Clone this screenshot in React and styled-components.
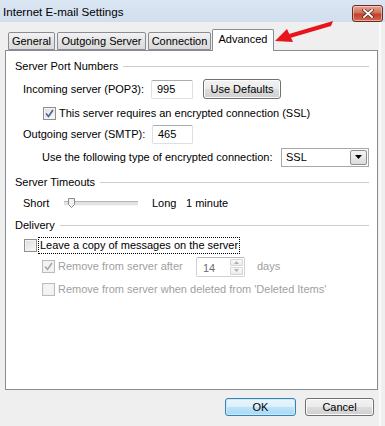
import React from 'react';
import styled, { createGlobalStyle } from 'styled-components';

const Global = createGlobalStyle`
  html, body { margin: 0; padding: 0; background: #efefef; }
  body {
    font-family: "Segoe UI", "Liberation Sans", Arial, sans-serif;
    font-size: 11px;
    color: #000;
  }
  * { box-sizing: border-box; }
`;

const Window = styled.div`
  position: relative;
  width: 385px;
  height: 426px;
  background: #efefef;
  display: flex;
  flex-direction: column;
  overflow: hidden;
`;

const TitleBar = styled.div`
  height: 22px;
  display: flex;
  align-items: center;
  justify-content: space-between;
  padding: 0 2px 0 3px;
  background: linear-gradient(#dbe6f3, #d1deee);
`;

const Title = styled.span`
  font-size: 11.6px;
  color: #000;
  margin-top: 1px;
`;

const CloseButton = styled.div`
  width: 31px;
  height: 17px;
  margin-top: 4px;
  border-radius: 3px;
  border: 1px solid #6d2a25;
  background: linear-gradient(#e8a493 0%, #d1705a 45%, #c2402a 55%, #d06a4f 100%);
  box-shadow: inset 0 0 0 1px rgba(255, 255, 255, 0.45);
  display: flex;
  align-items: center;
  justify-content: center;
`;

const Body = styled.div`
  flex: 1;
  display: flex;
  flex-direction: column;
  padding: 7px 7px 0 5px;
  box-shadow: inset -4px 0 0 #efefef, inset -6px 0 0 #f9f9f9;
`;

const TabRow = styled.div`
  display: flex;
  align-items: flex-end;
  gap: 2px;
  height: 21px;
  padding-left: 3px;
  position: relative;
  z-index: 2;
`;

const Tab = styled.div`
  width: ${p => p.$w}px;
  flex: none;
  height: ${p => (p.$active ? 22 : 18)}px;
  margin-bottom: ${p => (p.$active ? -1 : 0)}px;
  margin-left: ${p => (p.$active ? -1 : 0)}px;
  display: flex;
  align-items: center;
  justify-content: center;
  padding-bottom: ${p => (p.$active ? 3 : 0)}px;
  border: 1px solid #898c95;
  border-bottom: ${p => (p.$active ? 'none' : '1px solid #898c95')};
  border-radius: 2px 2px 0 0;
  background: ${p => (p.$active ? '#fff' : 'linear-gradient(#f3f3f3, #e4e4e4 50%, #dadada)')};
  white-space: nowrap;
`;

const Panel = styled.div`
  height: 340px;
  background: #fff;
  border: 1px solid #898c95;
  display: flex;
  flex-direction: column;
  padding: 5px 8px 0 9px;
  position: relative;
  z-index: 1;
`;

const Row = styled.div`
  display: flex;
  align-items: center;
  height: 20px;
  margin-top: ${p => p.$mt || 0}px;
  padding-left: ${p => p.$indent || 0}px;
  color: ${p => (p.$disabled ? '#a0a0a0' : '#000')};
  white-space: nowrap;
`;

const GroupLine = styled.div`
  flex: 1;
  height: 1px;
  margin-left: 5px;
  background: #c9cdd2;
`;

const FieldLabel = styled.span`
  width: ${p => p.$w}px;
  flex: none;
`;

const TextBox = styled.div`
  width: ${p => p.$w}px;
  height: ${p => p.$h || 19}px;
  border: 1px solid #dbdfe6;
  border-top-color: #abadb3;
  border-radius: 2px;
  background: #fff;
  display: flex;
  align-items: center;
  padding-left: 5px;
  flex: none;
`;

const PushButton = styled.div`
  width: ${p => p.$w}px;
  height: ${p => p.$h || 20}px;
  margin-left: ${p => p.$ml || 0}px;
  border: 1px solid ${p => (p.$default ? '#3c7fb1' : '#707070')};
  border-radius: 3px;
  background: ${p =>
    p.$default
      ? 'linear-gradient(#e9f5fc 0%, #dcf0fb 50%, #bde4f8 51%, #a7d9f5 100%)'
      : 'linear-gradient(#f2f2f2 0%, #ebebeb 50%, #dddddd 51%, #cfcfcf 100%)'};
  box-shadow: inset 0 0 0 1px ${p => (p.$default ? '#cbe9fb' : '#fcfcfc')};
  display: flex;
  align-items: center;
  justify-content: center;
  flex: none;
`;

const Box = styled.div`
  width: 13px;
  height: 13px;
  flex: none;
  border: 1px solid ${p => (p.$disabled ? '#bcbcbc' : '#8e8f8f')};
  background: ${p =>
    p.$disabled ? '#f4f4f4' : 'linear-gradient(135deg, #dcdcdc, #fbfbfb)'};
  box-shadow: inset 0 0 0 1px ${p => (p.$disabled ? '#f0f0f0' : '#f4f4f4')};
  display: flex;
  align-items: center;
  justify-content: center;
  margin-right: ${p => p.$gap || 3}px;
`;

const FocusText = styled.span`
  outline: 1px dotted #000;
  outline-offset: 0;
  padding: 0 1px 1px 1px;
  line-height: 14px;
`;

const Select = styled.div`
  width: 88px;
  height: 19px;
  margin-left: auto;
  border: 1px solid #a8a8a8;
  background: #fff;
  display: flex;
  align-items: center;
  justify-content: space-between;
  padding: 0 1px 0 4px;
  flex: none;
`;

const DropButton = styled.div`
  width: 17px;
  height: 15px;
  border: 1px solid #8e8f8f;
  border-radius: 2px;
  background: linear-gradient(#f4f4f4, #dcdcdc);
  display: flex;
  align-items: center;
  justify-content: center;
`;

const Spacer = styled.span`
  width: ${p => p.$w}px;
  flex: none;
`;

const SliderTrack = styled.div`
  position: relative;
  width: 74px;
  height: 12px;
  flex: none;
  &::before {
    content: '';
    position: absolute;
    left: 0;
    right: 0;
    top: 4px;
    height: 3px;
    border-top: 1px solid #b5b5b5;
    border-bottom: 1px solid #f6f6f6;
    background: #e3e3e3;
  }
`;

const Thumb = styled.svg`
  position: absolute;
  left: 4px;
  top: 1px;
`;

const Spinner = styled.div`
  width: 49px;
  height: 20px;
  border: 1px solid #cfd3d8;
  border-top-color: #b5b8be;
  border-radius: 2px;
  background: #fff;
  display: flex;
  flex: none;
  margin-top: 1px;
`;

const SpinValue = styled.div`
  flex: 1;
  display: flex;
  align-items: center;
  padding: 3px 0 0 6px;
  color: #6d6d6d;
`;

const SpinButtons = styled.div`
  width: 14px;
  display: flex;
  flex-direction: column;
  gap: 1px;
  padding: 1px 1px 1px 0;
`;

const SpinHalf = styled.div`
  flex: 1;
  border: 1px solid #d5d5d5;
  border-radius: 1px;
  background: linear-gradient(#fafafa, #ececec);
  display: flex;
  align-items: center;
  justify-content: center;
`;

const Footer = styled.div`
  display: flex;
  justify-content: flex-end;
  gap: 9px;
  padding: 8px 4px 0 0;
`;

const Arrow = styled.svg`
  position: absolute;
  left: 0;
  top: 0;
  pointer-events: none;
  z-index: 5;
`;

const Check = ({ color }) => (
  <svg width="9" height="9" viewBox="0 0 9 9">
    <path d="M1 4.5 L3.5 7.5 L8 1" fill="none" stroke={color} strokeWidth="1.6" />
  </svg>
);

export default function App() {
  return (
    <>
      <Global />
      <Window>
        <TitleBar>
          <Title>Internet E-mail Settings</Title>
          <CloseButton>
            <svg width="12" height="9" viewBox="0 0 12 9">
              <path d="M2 1 L10 8 M10 1 L2 8" stroke="#5a2a22" strokeWidth="3.2" strokeLinecap="square" />
              <path d="M2 1 L10 8 M10 1 L2 8" stroke="#fff" strokeWidth="1.8" strokeLinecap="square" />
            </svg>
          </CloseButton>
        </TitleBar>
        <Body>
          <TabRow>
            <Tab $w={47}>General</Tab>
            <Tab $w={89}>Outgoing Server</Tab>
            <Tab $w={63}>Connection</Tab>
            <Tab $w={62} $active>Advanced</Tab>
          </TabRow>
          <Panel>
            <Row>
              Server Port Numbers
              <GroupLine />
            </Row>
            <Row $mt={3} $indent={8}>
              <FieldLabel $w={128}>Incoming server (POP3):</FieldLabel>
              <TextBox $w={42}>995</TextBox>
              <PushButton $w={78} $ml={10}>Use Defaults</PushButton>
            </Row>
            <Row $mt={4} $indent={28}>
              <Box>
                <Check color="#4a5f97" />
              </Box>
              This server requires an encrypted connection (SSL)
            </Row>
            <Row $mt={1} $indent={8}>
              <FieldLabel $w={129}>Outgoing server (SMTP):</FieldLabel>
              <TextBox $w={41}>465</TextBox>
            </Row>
            <Row $mt={3} $indent={27}>
              Use the following type of encrypted connection:
              <Select>
                SSL
                <DropButton>
                  <svg width="7" height="4" viewBox="0 0 7 4">
                    <path d="M0 0 H7 L3.5 4 Z" fill="#000" />
                  </svg>
                </DropButton>
              </Select>
            </Row>
            <Row $mt={5}>
              Server Timeouts
              <GroupLine />
            </Row>
            <Row $mt={1} $indent={8}>
              <FieldLabel $w={41}>Short</FieldLabel>
              <SliderTrack>
                <Thumb width="7" height="10" viewBox="0 0 7 10">
                  <path d="M0.5 0.5 H6.5 V6.5 L3.5 9.5 L0.5 6.5 Z" fill="#f2f2f2" stroke="#8a8a8a" />
                </Thumb>
              </SliderTrack>
              <Spacer $w={14} />
              <FieldLabel $w={34}>Long</FieldLabel>
              1 minute
            </Row>
            <Row $mt={2}>
              Delivery
              <GroupLine />
            </Row>
            <Row $indent={9}>
              <Box $gap={2} />
              <FocusText>Leave a copy of messages on the server</FocusText>
            </Row>
            <Row $mt={1} $indent={27} $disabled>
              <Box $disabled>
                <Check color="#a8a8a8" />
              </Box>
              <FieldLabel $w={138}>Remove from server after</FieldLabel>
              <Spinner>
                <SpinValue>14</SpinValue>
                <SpinButtons>
                  <SpinHalf>
                    <svg width="5" height="3" viewBox="0 0 5 3"><path d="M0 3 H5 L2.5 0 Z" fill="#b0b0b0" /></svg>
                  </SpinHalf>
                  <SpinHalf>
                    <svg width="5" height="3" viewBox="0 0 5 3"><path d="M0 0 H5 L2.5 3 Z" fill="#b0b0b0" /></svg>
                  </SpinHalf>
                </SpinButtons>
              </Spinner>
              <Spacer $w={12} />
              days
            </Row>
            <Row $mt={3} $indent={27} $disabled>
              <Box $disabled />
              Remove from server when deleted from 'Deleted Items'
            </Row>
          </Panel>
          <Footer>
            <PushButton $w={71} $h={18} $default>OK</PushButton>
            <PushButton $w={69} $h={18}>Cancel</PushButton>
          </Footer>
        </Body>
        <Arrow width="385" height="60" viewBox="0 0 385 60">
          <path d="M333 21 L331 26 L290 38 L289 34 Z" fill="#e8141c" />
          <path d="M275 41 L287 29 L293 42 Z" fill="#e8141c" />
        </Arrow>
      </Window>
    </>
  );
}
